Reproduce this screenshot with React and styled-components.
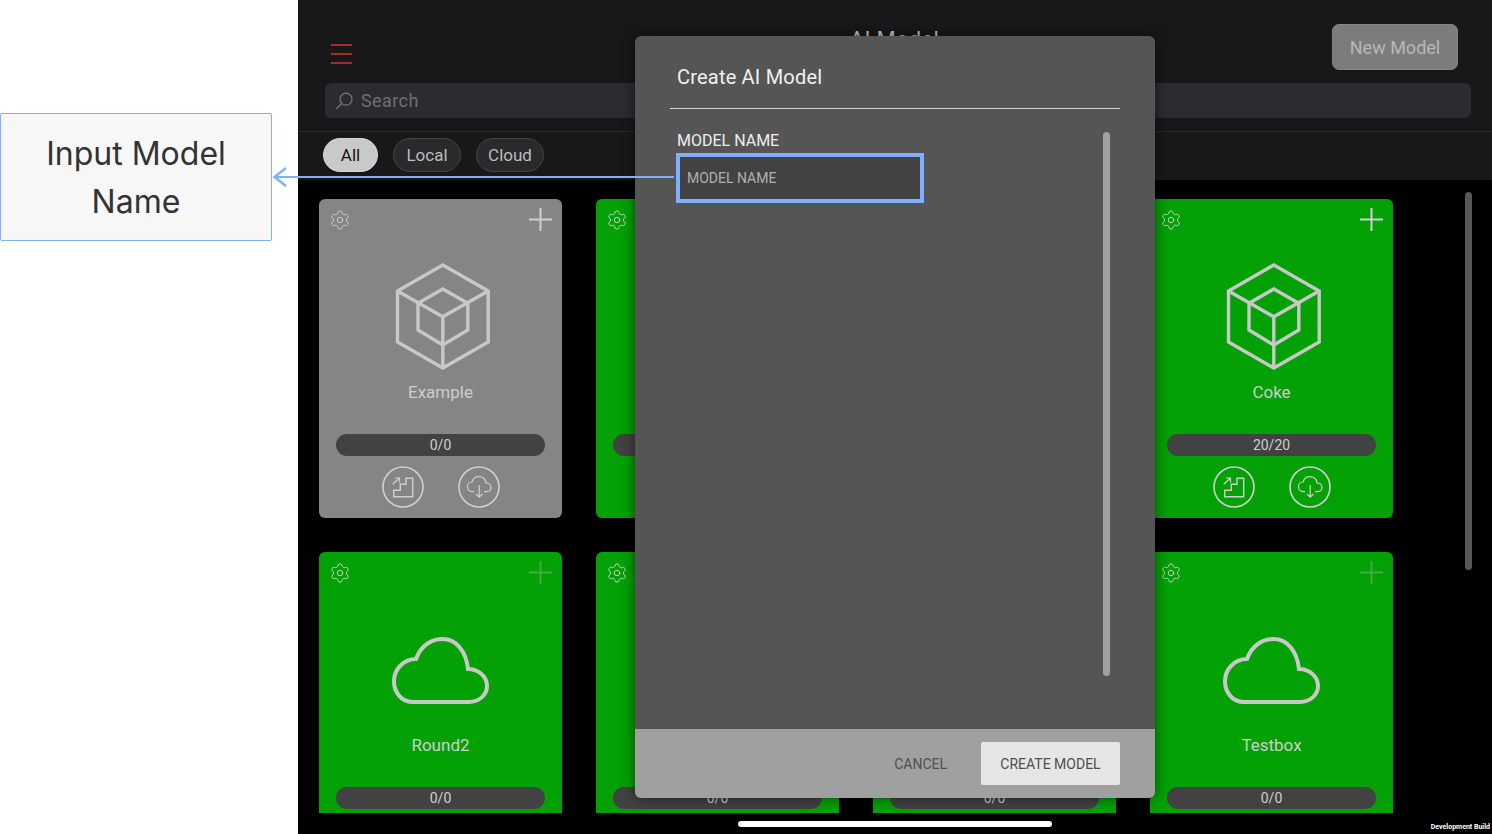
import React from "react";
import styled, { createGlobalStyle } from "styled-components";
import { Settings } from "lucide-react";

const cards = [
  { name: "Example", kind: "cube", tone: "grey", count: "0/0" },
  { name: "Bottle", kind: "cube", tone: "green", count: "0/0" },
  { name: "Can", kind: "cube", tone: "green", count: "0/0" },
  { name: "Coke", kind: "cube", tone: "green", count: "20/20" },
  { name: "Round2", kind: "cloud", tone: "green", count: "0/0", dimPlus: true },
  { name: "Round3", kind: "cloud", tone: "green", count: "0/0", dimPlus: true },
  { name: "Round4", kind: "cloud", tone: "green", count: "0/0", dimPlus: true },
  { name: "Testbox", kind: "cloud", tone: "green", count: "0/0", dimPlus: true },
];

function CubeIcon() {
  return (
    <svg width="100" height="108" viewBox="-4.5 0 100 108" fill="none" stroke="#c8c8c8" strokeWidth="3.4" strokeLinejoin="miter">
      <path d="M47.3 2 92.7 28v51L47.3 105 2 79V28z" />
      <path d="M47.3 26 72.3 40.3V67L47.3 82 22.5 67V40.3z" />
      <path d="M2 28 47.3 53.7 92.7 28M47.3 53.7V105" />
    </svg>
  );
}

function CloudIcon() {
  return (
    <svg width="100" height="71" viewBox="0 0 100 71" fill="none" stroke="#c8c8c8" strokeWidth="4">
      <path d="M22 67C10 67 3 57 3 46 3 34 13 24 25 24 30 10 41 4 52 4 65 4 75 16 77 34 88 34 96 42 96 51 96 60 88 67 78 67Z" />
    </svg>
  );
}

function PlusIcon({ color }) {
  return (
    <svg width="23" height="23" viewBox="0 0 23 23" stroke={color} strokeWidth="2">
      <path d="M0 11.5h23M11.5 0v23" />
    </svg>
  );
}

function StairsIcon() {
  return (
    <svg width="42" height="42" viewBox="0 0 42 42" fill="none" stroke="#cfcfcf">
      <circle cx="21" cy="21" r="20" strokeWidth="1.6" />
      <path d="M11.7 30.7h19V12.3H24v6h-5.7v6h-6.6z" strokeWidth="1.4" />
      <path d="M10.7 18.3 17.3 12.3M13 12h4.5v4.4" strokeWidth="1.2" />
    </svg>
  );
}

function CloudDownIcon() {
  return (
    <svg width="42" height="42" viewBox="0 0 42 42" fill="none" stroke="#cfcfcf">
      <circle cx="21" cy="21" r="20" strokeWidth="1.6" />
      <path d="M16 25.7H14.5C11.5 25.7 9.5 23.5 9.5 20.8 9.5 18 11.5 16 14 16 15 12.7 17.8 10.7 21 10.7 25 10.7 27.5 13.5 28 16.8 31 16.8 33 19 33 21.5 33 24 31 25.7 28.5 25.7H26" strokeWidth="1.2" />
      <path d="M21.2 19v12M18 28l3.2 3.2L24.4 28" strokeWidth="1.2" />
    </svg>
  );
}

function SearchIcon() {
  return (
    <svg width="18" height="18" viewBox="0 0 18 18" fill="none" stroke="#77777a" strokeWidth="1.2">
      <circle cx="11" cy="7.2" r="6" />
      <path d="M6.8 11.5 1 17" />
    </svg>
  );
}

function ModelCard({ card }) {
  return (
    <Card $tone={card.tone}>
      <CardTop>
        <Settings size={22} strokeWidth={1} color="#d0d0d0" />
        <PlusIcon color={card.dimPlus ? "#40ad40" : "#cfcfcf"} />
      </CardTop>
      <IconSlot>{card.kind === "cube" ? <CubeIcon /> : <CloudIcon />}</IconSlot>
      <CardName>{card.name}</CardName>
      <ProgressBar>{card.count}</ProgressBar>
      <CardActions>
        <StairsIcon />
        <CloudDownIcon />
      </CardActions>
    </Card>
  );
}

export default function App() {
  return (
    <>
      <GlobalStyle />
      <Page>
        <Side>
          <Callout>Input Model Name</Callout>
        </Side>
        <Screen>
          <Header>
            <TopRow>
              <Hamburger>
                <span />
                <span />
                <span />
              </Hamburger>
              <Title>AI Model</Title>
              <NewButton>New Model</NewButton>
            </TopRow>
            <SearchBar>
              <SearchIcon />
              <span>Search</span>
            </SearchBar>
            <Filters>
              <Chip $active>All</Chip>
              <Chip>Local</Chip>
              <Chip>Cloud</Chip>
            </Filters>
          </Header>
          <Content>
            <CardGrid>
              {cards.map((card) => (
                <ModelCard key={card.name} card={card} />
              ))}
            </CardGrid>
            <PageScroll />
          </Content>
          <Modal>
            <ModalHead>
              <h2>Create AI Model</h2>
            </ModalHead>
            <ModalBody>
              <FieldLabel htmlFor="model-name">MODEL NAME</FieldLabel>
              <NameInput id="model-name" placeholder="MODEL NAME" readOnly />
              <ModalScroll />
            </ModalBody>
            <ModalFoot>
              <CancelButton>CANCEL</CancelButton>
              <CreateButton>CREATE MODEL</CreateButton>
            </ModalFoot>
          </Modal>
          <HomeIndicator />
          <BuildTag>Development Build</BuildTag>
        </Screen>
        <Arrow width="404" height="24" viewBox="0 0 404 24" fill="none" stroke="#7fb0ff">
          <path d="M2 12H402" strokeWidth="2" />
          <path d="M14 3 2.5 12 14 21" strokeWidth="2.4" />
        </Arrow>
      </Page>
    </>
  );
}

const GlobalStyle = createGlobalStyle`
  html, body {
    margin: 0;
    padding: 0;
    background: #fff;
  }
  * {
    box-sizing: border-box;
  }
`;

const Page = styled.div`
  position: relative;
  display: flex;
  width: 1492px;
  height: 834px;
  overflow: hidden;
  font-family: Roboto, "Liberation Sans", sans-serif;
`;

const Side = styled.div`
  flex: 0 0 298px;
  padding-top: 113px;
  background: #fff;
`;

const Callout = styled.div`
  width: 272px;
  height: 128px;
  padding: 16px 30px;
  background: #f7f7f7;
  border: 1px solid #7fb0ff;
  border-radius: 2px;
  color: #333;
  font-family: Inter, "Liberation Sans", sans-serif;
  font-size: 32px;
  line-height: 48px;
  text-align: center;
`;

const Arrow = styled.svg`
  position: absolute;
  left: 272px;
  top: 165px;
`;

const Screen = styled.div`
  position: relative;
  flex: 1;
  display: flex;
  flex-direction: column;
  background: #000;
`;

const Header = styled.header`
  height: 180px;
  background: #18181a;
`;

const TopRow = styled.div`
  display: grid;
  grid-template-columns: 1fr auto 1fr;
  height: 83px;
  padding: 24px 34px 0 33px;
`;

const Hamburger = styled.div`
  display: flex;
  flex-direction: column;
  justify-content: space-between;
  width: 21px;
  height: 20px;
  margin-top: 20px;
  span {
    height: 2px;
    background: #a82e2e;
  }
`;

const Title = styled.div`
  margin-top: 3px;
  color: #c8c8c8;
  font-size: 22px;
  line-height: 26px;
  letter-spacing: 0.3px;
`;

const NewButton = styled.button`
  justify-self: end;
  width: 126px;
  height: 46px;
  padding: 0;
  background: #7c7c7c;
  border: 1px solid #858585;
  border-radius: 7px;
  color: #b8b8b8;
  font-family: inherit;
  font-size: 18px;
`;

const SearchBar = styled.div`
  display: flex;
  align-items: center;
  gap: 8px;
  height: 35px;
  margin: 0 21px 0 27px;
  padding-left: 10px;
  background: #2c2c30;
  border-radius: 6px;
  color: #6f6f72;
  font-size: 18px;
  letter-spacing: 0.4px;
`;

const Filters = styled.div`
  display: flex;
  gap: 15px;
  height: 49px;
  margin-top: 13px;
  padding: 6px 0 0 25px;
  border-top: 1px solid #2a2a2c;
`;

const Chip = styled.div`
  display: flex;
  align-items: center;
  justify-content: center;
  width: ${(p) => (p.$active ? "55px" : "68px")};
  height: 34px;
  background: ${(p) => (p.$active ? "#c9c9c9" : "#2a2a2c")};
  border: 1px solid ${(p) => (p.$active ? "#d5d5d5" : "#444446")};
  border-radius: 17px;
  color: ${(p) => (p.$active ? "#111" : "#bdbdbd")};
  font-size: 17px;
`;

const Content = styled.main`
  position: relative;
  height: 633px;
  overflow: hidden;
`;

const CardGrid = styled.div`
  display: grid;
  grid-template-columns: repeat(4, 243px);
  grid-auto-rows: 319px;
  gap: 34px;
  padding: 19px 0 0 21px;
`;

const Card = styled.article`
  display: flex;
  flex-direction: column;
  padding: 10px 10px 0;
  background: ${(p) => (p.$tone === "grey" ? "#858585" : "#04a106")};
  border-radius: 6px;
`;

const CardTop = styled.div`
  display: flex;
  align-items: center;
  justify-content: space-between;
  height: 21px;
`;

const IconSlot = styled.div`
  display: flex;
  align-items: center;
  justify-content: center;
  height: 108px;
  margin-top: 33px;
`;

const CardName = styled.div`
  margin-top: 9px;
  color: #cdcdcd;
  font-size: 17px;
  line-height: 24px;
  text-align: center;
`;

const ProgressBar = styled.div`
  height: 22px;
  margin: 30px 7px 0;
  background: #424242;
  border-radius: 11px;
  color: #cfcfcf;
  font-size: 14px;
  line-height: 22px;
  text-align: center;
`;

const CardActions = styled.div`
  display: flex;
  justify-content: center;
  gap: 34px;
  margin-top: 10px;
`;

const PageScroll = styled.div`
  position: absolute;
  top: 12px;
  right: 20px;
  width: 7px;
  height: 378px;
  background: #57575a;
  border-radius: 4px;
`;

const Modal = styled.section`
  position: absolute;
  top: 36px;
  left: 337px;
  display: flex;
  flex-direction: column;
  width: 520px;
  height: 762px;
  background: #555;
  border-radius: 6px;
  box-shadow: 0 0 14px rgba(0, 0, 0, 0.55);
`;

const ModalHead = styled.div`
  height: 73px;
  margin: 0 35px;
  padding: 28px 0 0 7px;
  border-bottom: 1.5px solid #d8d8d8;
  h2 {
    margin: 0;
    color: #f0f0f0;
    font-size: 20px;
    font-weight: 400;
    line-height: 26px;
    letter-spacing: 0.2px;
  }
`;

const ModalBody = styled.div`
  position: relative;
  flex: 1;
  padding: 22px 42px 0;
`;

const FieldLabel = styled.label`
  display: block;
  color: #eee;
  font-size: 16px;
  line-height: 20px;
`;

const NameInput = styled.input`
  display: block;
  width: 248px;
  height: 50px;
  margin: 2px 0 0 -1px;
  padding: 0 7px;
  background: #424242;
  border: 4px solid #7fb0ff;
  color: #bbb;
  font-family: inherit;
  font-size: 14px;
  outline: none;
  &::placeholder {
    color: #b0b0b0;
    opacity: 1;
  }
`;

const ModalScroll = styled.div`
  position: absolute;
  top: 23px;
  right: 45px;
  width: 7px;
  height: 544px;
  background: #a0a0a0;
  border-radius: 4px;
`;

const ModalFoot = styled.div`
  display: flex;
  align-items: center;
  justify-content: flex-end;
  gap: 34px;
  height: 69px;
  padding-right: 35px;
  background: #a0a0a0;
  border-radius: 0 0 6px 6px;
`;

const CancelButton = styled.button`
  padding: 0;
  background: none;
  border: 0;
  color: #4f4f4f;
  font-family: inherit;
  font-size: 14px;
`;

const CreateButton = styled.button`
  width: 139px;
  height: 43px;
  padding: 0;
  background: #e6e6e6;
  border: 0;
  border-radius: 2px;
  color: #4f4f4f;
  font-family: inherit;
  font-size: 14px;
`;

const HomeIndicator = styled.div`
  position: absolute;
  bottom: 7px;
  left: 440px;
  width: 314px;
  height: 6px;
  background: #fff;
  border-radius: 3px;
`;

const BuildTag = styled.div`
  position: absolute;
  right: 2px;
  bottom: 3px;
  color: #fff;
  font-size: 7px;
  font-weight: 700;
  line-height: 8px;
`;
